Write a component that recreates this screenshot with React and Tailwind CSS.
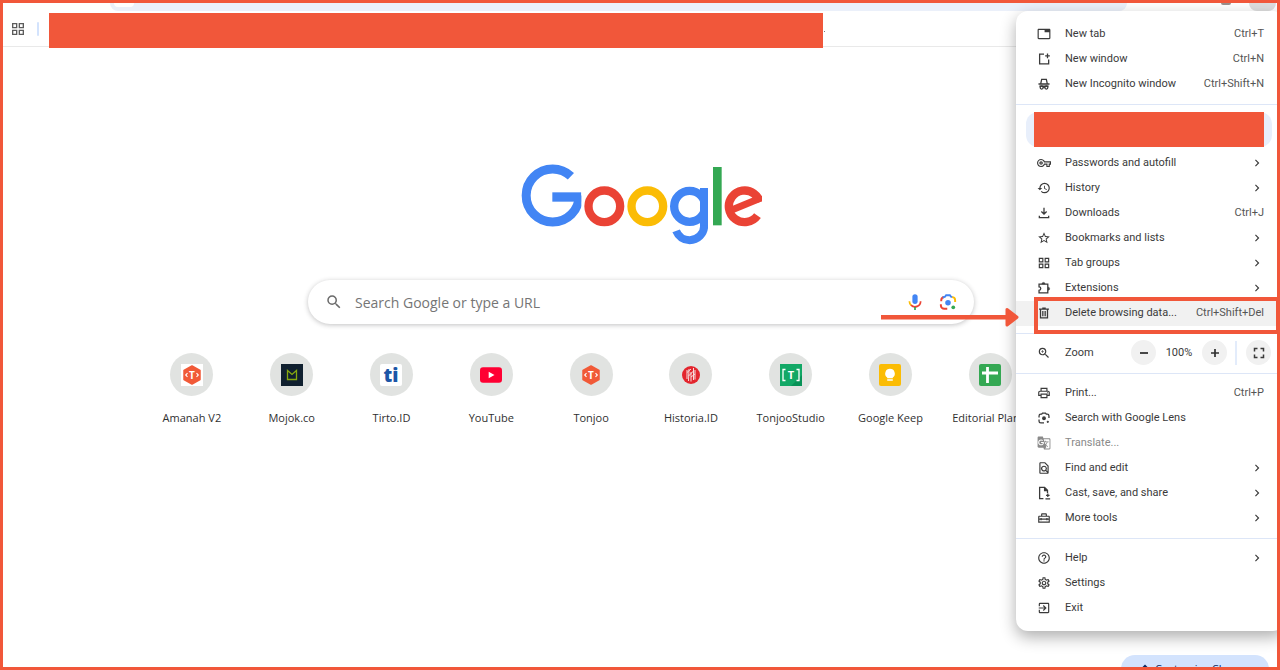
import React, { useState } from "react";
import {
  MdChevronRight,
  MdExitToApp,
  MdFullscreen,
  MdGTranslate,
  MdHelpOutline,
  MdHistory,
  MdOutlineFindInPage,
  MdOutlineGridView,
  MdOutlineHomeRepairService,
  MdOutlinePrint,
  MdOutlineSettings,
  MdOutlineTab,
  MdOutlineVpnKey,
  MdSearch,
  MdStarOutline,
  MdZoomIn,
} from "react-icons/md";

/* ---------- menu icons that the icon set lacks ---------- */

const LineIcon = ({ children }) => (
  <svg
    viewBox="0 0 24 24"
    fill="none"
    stroke="currentColor"
    strokeWidth="2.2"
    className="w-3.5 h-3.5"
    aria-hidden="true"
  >
    {children}
  </svg>
);

const NewWindowIcon = () => (
  <LineIcon>
    <path d="M12 3.5H4.500V20.500H20V13" />
    <path d="M18 2.500v8M14 6.500h8" />
  </LineIcon>
);

const IncognitoIcon = () => (
  <LineIcon>
    <path d="M6.500 11 8 4h8l1.500 7M2.500 12h19" />
    <circle cx="8" cy="18" r="2.600" />
    <circle cx="16" cy="18" r="2.600" />
    <path d="M10 17.500h4M4 15.500h16" />
  </LineIcon>
);

const DownloadIcon = () => (
  <LineIcon>
    <path d="M12 3v11M7.500 9.500l4.500 4.500 4.500-4.500M4 16.500V20h16v-3.500" />
  </LineIcon>
);

const ExtensionIcon = () => (
  <LineIcon>
    <path d="M3.500 5.500h15v15h-15v-4.500a3 3 0 0 0 0-6z" />
    <path d="M8.500 5a2.600 2.600 0 0 1 5.200 0zM19 10.500a2.600 2.600 0 0 1 0 5.200z" fill="currentColor" strokeWidth="1" />
  </LineIcon>
);

const TrashIcon = () => (
  <LineIcon>
    <path d="M3.500 5.500h17M9 3.500h6M6 5.500v15h12v-15M10 8.500v9M14 8.500v9" />
  </LineIcon>
);

const LensIcon = () => (
  <LineIcon>
    <path d="M3.500 11V8.500a3 3 0 0 1 3-3H8L9.500 3.500h5l1.500 2h1.500a3 3 0 0 1 3 3V12M3.500 14.500v3a3 3 0 0 0 3 3H12" />
    <circle cx="12" cy="12.500" r="2.200" fill="currentColor" />
    <circle cx="18.500" cy="18.500" r="0.800" fill="currentColor" />
  </LineIcon>
);

const SaveShareIcon = () => (
  <LineIcon>
    <path d="M11 21.500H4.500V2.500h8.500l5 5V12M13 2.500V8h5" />
    <path d="M18.500 13v6M15.500 16h6M14.500 22h8" />
  </LineIcon>
);

/* ---------- page drawings ---------- */

const GoogleLogo = () => (
  <svg
    viewBox="60 43 723 243"
    className="w-[241px] h-[81px]"
    fill="none"
    role="img"
    aria-label="Google"
  >
    <defs>
      <clipPath id="clip-big">
        <rect x="60" y="43" width="181" height="243" />
      </clipPath>
      <clipPath id="clip-small">
        <rect x="500" y="43" width="121" height="243" />
      </clipPath>
    </defs>
    <g clipPath="url(#clip-big)">
      <circle cx="155" cy="137.5" r="79.500" stroke="#4285f4" strokeWidth="27" pathLength="360" strokeDasharray="312 48" />
      <rect x="154" y="128" width="87" height="28" fill="#4285f4" />
    </g>
    <circle cx="310" cy="170" r="47.500" stroke="#ea4335" strokeWidth="25" />
    <circle cx="439" cy="170" r="47.500" stroke="#fbbc05" strokeWidth="25" />
    <g clipPath="url(#clip-small)">
      <circle cx="566" cy="170" r="46.500" stroke="#4285f4" strokeWidth="25" />
      <rect x="597" y="115" width="24" height="115" fill="#4285f4" />
      <circle cx="566" cy="228" r="43.500" stroke="#4285f4" strokeWidth="24" pathLength="360" strokeDasharray="158 202" />
    </g>
    <rect x="636" y="52" width="26" height="175" fill="#34a853" />
    <circle cx="731" cy="170" r="47.500" stroke="#ea4335" strokeWidth="25" pathLength="360" strokeDasharray="307 53" transform="rotate(36 731 170)" />
    <line x1="692" y1="181" x2="772" y2="148" stroke="#ea4335" strokeWidth="21" />
  </svg>
);

const MicIcon = () => (
  <svg viewBox="0 0 24 24" className="w-[18px] h-[18px]" fill="none" aria-hidden="true">
    <rect x="8.500" y="1.500" width="7" height="13" rx="3.500" fill="#4285f4" />
    <path d="M4.500 11a7.500 7.500 0 0 0 2.500 5.500" stroke="#fbbc05" strokeWidth="2.300" />
    <path d="M6.700 16.200a7.500 7.500 0 0 0 12.800-5.200" stroke="#ea4335" strokeWidth="2.300" />
    <path d="M12 18.500v4" stroke="#34a853" strokeWidth="2.300" />
  </svg>
);

const ColorLensIcon = () => (
  <svg viewBox="0 0 24 24" className="w-[18px] h-[18px]" fill="none" strokeWidth="2.600" aria-hidden="true">
    <path d="M3 11V9.500A4.500 4.500 0 0 1 6.500 5.300" stroke="#ea4335" />
    <path d="M5 6 8 5l1.500-2h5L16 5l2 .5" stroke="#4285f4" />
    <path d="M17.500 5.500a4 4 0 0 1 4 4V12" stroke="#fbbc05" />
    <path d="M2.500 15v1.500a4.500 4.500 0 0 0 4.500 4.500h4" stroke="#ea4335" />
    <circle cx="12" cy="13" r="3.700" fill="#4285f4" />
    <circle cx="19" cy="19" r="2.500" fill="#34a853" />
  </svg>
);

const Hexagon = ({ boxed }) => (
  <svg viewBox="0 0 22 22" className="w-[22px] h-[22px]" aria-hidden="true">
    {boxed && <rect width="22" height="22" fill="#fff" />}
    <path d="M11 2 19 6.500v9L11 20l-8-4.500v-9z" fill="#f15a38" stroke="#f15a38" strokeWidth="1.500" strokeLinejoin="round" />
    <path d="M6.500 9.200 4.700 11l1.800 1.800M15.500 9.200l1.800 1.800-1.800 1.800" stroke="#fff" strokeWidth="1.100" fill="none" />
    <text x="11" y="14.500" textAnchor="middle" fontSize="10" fontWeight="700" fill="#fff" fontFamily="Open Sans, sans-serif">T</text>
  </svg>
);

const SITE_ICONS = {
  amanah: <Hexagon boxed />,
  mojok: (
    <svg viewBox="0 0 22 22" className="w-[22px] h-[22px]" aria-hidden="true">
      <rect width="22" height="22" fill="#10202f" />
      <path d="M6.500 15.500V6.500l4.500 4 4.500-4v9z" fill="none" stroke="#86a80f" strokeWidth="1.300" />
    </svg>
  ),
  tirto: (
    <svg viewBox="0 0 22 22" className="w-[22px] h-[22px]" aria-hidden="true">
      <rect width="22" height="22" rx="2" fill="#fff" />
      <text x="11" y="18" textAnchor="middle" fontSize="19" fontWeight="800" fill="#1c56a6" fontFamily="Open Sans, sans-serif">ti</text>
    </svg>
  ),
  youtube: (
    <svg viewBox="0 0 22 22" className="w-[22px] h-[22px]" aria-hidden="true">
      <rect y="3.300" width="22" height="15.400" rx="3" fill="#ff0033" />
      <path d="M8.700 7.800v6.400l5.800-3.200z" fill="#fff" />
    </svg>
  ),
  tonjoo: <Hexagon />,
  historia: (
    <svg viewBox="0 0 22 22" className="w-[22px] h-[22px]" fill="none" aria-hidden="true">
      <circle cx="11" cy="11" r="9" fill="#e3262e" />
      <g stroke="#f6dede" strokeWidth="1">
        <path d="M7 6v9M9 5l-.5 12M11 8v9.500M13.500 4v12M15 6v9.500M7 8.500l4-3.500M8.500 12l5-5M11 13l4-3" />
      </g>
    </svg>
  ),
  studio: (
    <svg viewBox="0 0 22 22" className="w-[22px] h-[22px]" aria-hidden="true">
      <rect width="22" height="22" fill="#12a866" />
      <path d="M11 22 22 11v11z" fill="#089257" />
      <path d="M5.500 5.500H3v11h2.500M16.500 5.500H19v11h-2.500" fill="none" stroke="#fff" strokeWidth="1.300" />
      <text x="11" y="15" textAnchor="middle" fontSize="11" fontWeight="700" fill="#fff" fontFamily="Open Sans, sans-serif">T</text>
    </svg>
  ),
  keep: (
    <svg viewBox="0 0 22 22" className="w-[22px] h-[22px]" aria-hidden="true">
      <rect width="22" height="22" rx="2" fill="#fbbc04" />
      <path d="M11 4.800a4.800 4.800 0 0 0-2.800 8.700v.8h5.600v-.8A4.800 4.800 0 0 0 11 4.800zM8.200 15.300h5.600v1.500H8.200z" fill="#fff" />
    </svg>
  ),
  sheet: (
    <svg viewBox="0 0 22 22" className="w-[22px] h-[22px]" aria-hidden="true">
      <rect width="22" height="22" rx="2" fill="#34a853" />
      <path d="M8.500 3v16M3 9h16" stroke="#fff" strokeWidth="2.800" />
    </svg>
  ),
};

const shortcuts = [
  { name: "Amanah V2", icon: "amanah" },
  { name: "Mojok.co", icon: "mojok" },
  { name: "Tirto.ID", icon: "tirto" },
  { name: "YouTube", icon: "youtube" },
  { name: "Tonjoo", icon: "tonjoo" },
  { name: "Historia.ID", icon: "historia" },
  { name: "TonjooStudio", icon: "studio" },
  { name: "Google Keep", icon: "keep" },
  { name: "Editorial Plan...", icon: "sheet" },
];

const windowItems = [
  { label: "New tab", icon: <MdOutlineTab size={14} />, keys: "Ctrl+T" },
  { label: "New window", icon: <NewWindowIcon />, keys: "Ctrl+N" },
  { label: "New Incognito window", icon: <IncognitoIcon />, keys: "Ctrl+Shift+N" },
];

const browsingItems = [
  { label: "Passwords and autofill", icon: <MdOutlineVpnKey size={14} />, sub: true },
  { label: "History", icon: <MdHistory size={14} />, sub: true },
  { label: "Downloads", icon: <DownloadIcon />, keys: "Ctrl+J" },
  { label: "Bookmarks and lists", icon: <MdStarOutline size={14} />, sub: true },
  { label: "Tab groups", icon: <MdOutlineGridView size={14} />, sub: true },
  { label: "Extensions", icon: <ExtensionIcon />, sub: true },
  { label: "Delete browsing data...", icon: <TrashIcon />, keys: "Ctrl+Shift+Del", marked: true },
];

const pageItems = [
  { label: "Print...", icon: <MdOutlinePrint size={14} />, keys: "Ctrl+P" },
  { label: "Search with Google Lens", icon: <LensIcon /> },
  { label: "Translate...", icon: <MdGTranslate size={14} />, disabled: true },
  { label: "Find and edit", icon: <MdOutlineFindInPage size={14} />, sub: true },
  { label: "Cast, save, and share", icon: <SaveShareIcon />, sub: true },
  { label: "More tools", icon: <MdOutlineHomeRepairService size={14} />, sub: true },
];

const appItems = [
  { label: "Help", icon: <MdHelpOutline size={14} />, sub: true },
  { label: "Settings", icon: <MdOutlineSettings size={14} /> },
  { label: "Exit", icon: <MdExitToApp size={14} /> },
];

const MenuItem = ({ item }) => (
  <div className={item.marked ? "relative bg-[#f1f1f1]" : ""}>
    <button
      disabled={item.disabled}
      className="flex items-center gap-3.5 w-full h-[25px] pb-0.5 pl-[21px] pr-[21px] text-left hover:bg-[#f1f1f1] disabled:text-[#8a8a8a]"
    >
      <span className="shrink-0">{item.icon}</span>
      <span className="flex-1 whitespace-nowrap">{item.label}</span>
      {item.keys && <span className="whitespace-nowrap text-[#555]">{item.keys}</span>}
      {item.sub && <MdChevronRight size={14} />}
    </button>

    {/* Callout frame and arrow */}
    {item.marked && (
      <>
        <div className="absolute -top-1 left-[18px] right-[5px] h-[37px] border-4 border-[#f1573a] pointer-events-none" />
        <svg
          viewBox="0 0 138 20"
          className="absolute top-1.5 -left-[135px] w-[138px] h-5 pointer-events-none"
          aria-hidden="true"
        >
          <rect y="8" width="128" height="4.500" fill="#f1573a" />
          <path d="M126 2.500v15.500l10-7.800z" fill="#f1573a" stroke="#f1573a" strokeWidth="3" strokeLinejoin="round" />
        </svg>
      </>
    )}
  </div>
);

const Separator = () => <hr className="my-[7px] border-t border-[#dde6f7]" />;

const App = () => {
  const [query, setQuery] = useState("");
  const [zoom, setZoom] = useState(100);

  return (
    <div className="relative h-screen overflow-hidden border-[3px] border-[#f1573a] bg-white font-['Open_Sans',sans-serif] text-[#303030]">
      {/* Toolbar */}
      <div className="flex justify-between h-2 pl-[107px] pr-px">
        <div className="flex w-[1017px] rounded-b-full bg-[#ebf0fa]">
          <div className="w-5 h-1 ml-1 rounded-b-full bg-white" />
        </div>
        <div className="flex items-start gap-[18px]">
          <div className="w-2.5 h-0.5 rounded-b-full bg-[#9a8f8c]" />
          <div className="w-[27px] h-2 rounded-b-full bg-[#dedede]" />
        </div>
      </div>

      {/* Bookmarks bar */}
      <div className="relative flex items-center h-9 border-b border-[#e9e9e9] pl-[7px]">
        <button aria-label="Apps" className="text-[#5c5c5c]">
          <MdOutlineGridView size={16} />
        </button>
        <div className="w-0.5 h-3.5 ml-[11px] rounded bg-[#d3e3fd]" />
        <div className="absolute left-[46px] top-0.5 w-[774px] h-[35px] bg-[#f1573a]" />
        <div className="absolute left-[821px] top-5 w-px h-px bg-[#777]" />
      </div>

      {/* New tab page */}
      <main className="flex flex-col items-center pt-[117px] pl-0.5">
        <GoogleLogo />

        <form
          onSubmit={(e) => e.preventDefault()}
          className="flex items-center w-[666px] h-11 mt-[35px] pl-[17px] pr-[17px] rounded-full bg-white shadow-[0_1px_5px_rgba(32,33,36,0.28)]"
        >
          <MdSearch size={18} className="text-[#6a6a6a]" />
          <input
            value={query}
            onChange={(e) => setQuery(e.target.value)}
            type="text"
            aria-label="Search"
            placeholder="Search Google or type a URL"
            className="flex-1 ml-3 pt-0.5 text-sm outline-none placeholder:text-[#757575]"
          />
          <button type="button" aria-label="Voice search">
            <MicIcon />
          </button>
          <button type="button" aria-label="Image search" className="ml-[15px]">
            <ColorLensIcon />
          </button>
        </form>

        <div className="grid grid-cols-10 w-[998px] mt-[29px]">
          {shortcuts.map((site) => (
            <a key={site.name} href="#" className="flex flex-col items-center">
              <span className="flex items-center justify-center w-[43px] h-[43px] rounded-full bg-[#e1e3e1]">
                {SITE_ICONS[site.icon]}
              </span>
              <span className="mt-3.5 text-[11px] leading-4 whitespace-nowrap">{site.name}</span>
            </a>
          ))}
        </div>
      </main>

      <button className="absolute right-2 -bottom-4 flex items-center justify-center gap-1.5 w-[148px] h-7 rounded-full bg-[#d3e3fd] text-[11px] whitespace-nowrap text-[#0b2a63]">
        <svg viewBox="0 0 12 12" className="w-3 h-3" aria-hidden="true">
          <path d="M1 11V8.500L8 1.500 10.500 4 3.500 11z" fill="currentColor" />
        </svg>
        Customize Chrome
      </button>

      {/* Browser menu, its right edge runs under the frame */}
      <div className="absolute top-2 -right-2 w-[269px] pt-[11px] pb-2.5 rounded-xl bg-white font-[Roboto,sans-serif] text-[11px] leading-4 text-[#3a3a3a] shadow-[0_6px_16px_rgba(0,0,0,0.32)]">
        {windowItems.map((item) => (
          <MenuItem key={item.label} item={item} />
        ))}
        <Separator />

        <button
          aria-label="Profile"
          className="block w-[246px] h-[35px] ml-2.5 mb-1 pl-2 pr-2 rounded-xl bg-[#e8effb]"
        >
          <span className="block h-full bg-[#f1573a]" />
        </button>

        {browsingItems.map((item) => (
          <MenuItem key={item.label} item={item} />
        ))}
        <Separator />

        <div className="flex items-center h-[25px] pb-0.5 pl-[21px] pr-[14px]">
          <MdZoomIn size={14} />
          <span className="flex-1 ml-3.5">Zoom</span>
          <button
            aria-label="Zoom out"
            onClick={() => setZoom(zoom - 10)}
            className="flex items-center justify-center w-[25px] h-[25px] rounded-full bg-[#f1f1f1]"
          >
            <span className="w-2 h-0.5 bg-[#474747]" />
          </button>
          <span className="w-[46px] text-center">{zoom}%</span>
          <button
            aria-label="Zoom in"
            onClick={() => setZoom(zoom + 10)}
            className="flex items-center justify-center w-[25px] h-[25px] rounded-full bg-[#f1f1f1]"
          >
            <svg viewBox="0 0 8 8" className="w-2 h-2" aria-hidden="true">
              <path d="M4 0v8M0 4h8" stroke="#303030" strokeWidth="1.700" />
            </svg>
          </button>
          <span className="w-0.5 h-6 ml-2 mr-[9px] bg-[#e3ecfb]" />
          <button
            aria-label="Full screen"
            className="flex items-center justify-center w-[25px] h-[25px] rounded-full bg-[#f1f1f1]"
          >
            <MdFullscreen size={18} />
          </button>
        </div>
        <Separator />

        {pageItems.map((item) => (
          <MenuItem key={item.label} item={item} />
        ))}
        <Separator />

        {appItems.map((item) => (
          <MenuItem key={item.label} item={item} />
        ))}
      </div>
    </div>
  );
};

export default App;
